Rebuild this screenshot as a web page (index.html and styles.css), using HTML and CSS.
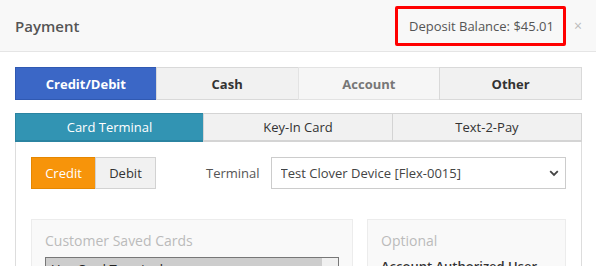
FILE: index.html
```html
<!DOCTYPE html>
<html lang="en">
<head>
<meta charset="UTF-8">
<meta name="viewport" content="width=device-width, initial-scale=1.0">
<title>Payment</title>
<link rel="stylesheet" href="styles.css">
</head>
<body>
<div class="modal">
    <div class="modal-header">
        <h4 class="modal-title">Payment</h4>
        <div class="balance">Deposit Balance: $45.01</div>
        <button class="close" type="button">&times;</button>
    </div>

    <div class="modal-body">
        <div class="method-tabs">
            <button class="method active">Credit/Debit</button>
            <button class="method">Cash</button>
            <button class="method muted">Account</button>
            <button class="method">Other</button>
        </div>

        <div class="card-tabs">
            <button class="card-tab active">Card Terminal</button>
            <button class="card-tab">Key-In Card</button>
            <button class="card-tab">Text-2-Pay</button>
        </div>

        <div class="tab-panel">
            <div class="terminal-row">
                <div class="toggle">
                    <button class="toggle-btn on">Credit</button>
                    <button class="toggle-btn">Debit</button>
                </div>
                <label class="terminal-label" for="terminal">Terminal</label>
                <div class="select-wrap">
                    <select id="terminal" class="terminal-select">
                        <option>Test Clover Device [Flex-0015]</option>
                    </select>
                    <svg class="chevron" width="10" height="7" viewBox="0 0 10 7">
                        <path d="M1.2 1.2 L5 5 L8.8 1.2" fill="none" stroke="#444" stroke-width="1.8"/>
                    </svg>
                </div>
            </div>

            <div class="boxes">
                <div class="box">
                    <div class="box-title">Customer Saved Cards</div>
                    <div class="listbox">
                        <div class="list-option">Use Card Terminal</div>
                        <div class="list-scroll"></div>
                    </div>
                </div>
                <div class="box">
                    <div class="box-title">Optional</div>
                    <div class="box-label">Account Authorized User</div>
                </div>
            </div>
        </div>
    </div>
</div>
</body>
</html>
```

FILE: styles.css
```css
body {
    margin: 0;
    font-family: "Open Sans", Arial, sans-serif;
    color: #555;
    background-color: #fff;
    overflow: hidden;
}
button {
    font-family: inherit;
}
.modal-header {
    display: flex;
    align-items: center;
    height: 51px;
    padding: 0 14px 0 15px;
    background-color: #f8f8f8;
    border-bottom: 1px solid #e5e5e5;
}
.modal-title {
    margin: 0;
    flex: 1;
    font-size: 15px;
    font-weight: 600;
    color: #555;
}
.balance {
    box-sizing: border-box;
    height: 40px;
    padding: 0 9px 0 11px;
    line-height: 34px;
    white-space: nowrap;
    font-size: 13px;
    color: #555;
    border: 3px solid #ff0000;
    border-radius: 2px;
}
.close {
    margin-left: 8px;
    padding: 0;
    border: none;
    background: none;
    font-size: 14px;
    line-height: 1;
    color: #bbb;
}
.modal-body {
    padding: 15px 14px 0 15px;
}
.method-tabs {
    display: grid;
    grid-template-columns: repeat(4, 1fr);
}
.method {
    height: 33px;
    font-size: 13px;
    font-weight: 700;
    color: #333;
    background-color: #f1f1f1;
    border: 1px solid #d9d9d9;
    margin-left: -1px;
}
.method:first-child {
    margin-left: 0;
}
.method.active {
    color: #fff;
    background-color: #3b67c6;
    border-color: #3059b2;
}
.method.muted {
    color: #777;
    background-color: #f6f6f6;
    border-color: #e3e3e3;
}
.card-tabs {
    display: grid;
    grid-template-columns: repeat(3, 1fr);
    margin-top: 13px;
}
.card-tab {
    height: 29px;
    font-size: 13px;
    color: #333;
    background-color: #f1f1f1;
    border: 1px solid #d4d4d4;
    border-bottom: 2px solid #d4d4d4;
    margin-left: -1px;
}
.card-tab:first-child {
    margin-left: 0;
}
.card-tab.active {
    color: #fff;
    background-color: #3294b3;
    border-color: #2b84a1;
}
.tab-panel {
    border: 1px solid #ddd;
    border-top: none;
    padding: 15px 15px 0 15px;
}
.terminal-row {
    display: flex;
    align-items: center;
}
.toggle {
    display: flex;
}
.toggle-btn {
    height: 32px;
    padding: 0 13px;
    font-size: 13px;
    color: #333;
    background-color: #f1f1f1;
    border: 1px solid #d2d2d2;
}
.toggle-btn.on {
    width: 65px;
    color: #fff;
    background-color: #f7940a;
    border-color: #e58700;
}
.toggle-btn + .toggle-btn {
    width: 61px;
    margin-left: -1px;
}
.terminal-label {
    margin-left: 50px;
    margin-right: 11px;
    font-size: 13px;
    color: #555;
}
.select-wrap {
    position: relative;
    flex: 1;
}
.terminal-select {
    width: 100%;
    height: 32px;
    padding: 0 9px;
    font-family: inherit;
    font-size: 13px;
    color: #444;
    background-color: #fff;
    border: 1px solid #ccc;
    border-radius: 0;
    appearance: none;
}
.chevron {
    position: absolute;
    right: 7px;
    top: 13px;
}
.boxes {
    display: grid;
    grid-template-columns: 322px 1fr;
    gap: 14px;
    margin-top: 30px;
}
.box {
    height: 80px;
    padding: 11px 13px;
    background-color: #f9f9f9;
    border: 1px solid #ececec;
}
.box-title {
    font-size: 14px;
    color: #bbb;
}
.listbox {
    display: flex;
    margin-top: 7px;
    height: 40px;
    border: 1px solid #777;
    background-color: #fff;
}
.list-option {
    flex: 1;
    padding: 2px 5px;
    font-size: 13px;
    color: #222;
    background-color: #cdcdcd;
}
.list-scroll {
    width: 16px;
    background-color: #f0f0f0;
}
.box-label {
    margin-top: 7px;
    font-size: 13px;
    font-weight: 600;
    color: #333;
}
```
